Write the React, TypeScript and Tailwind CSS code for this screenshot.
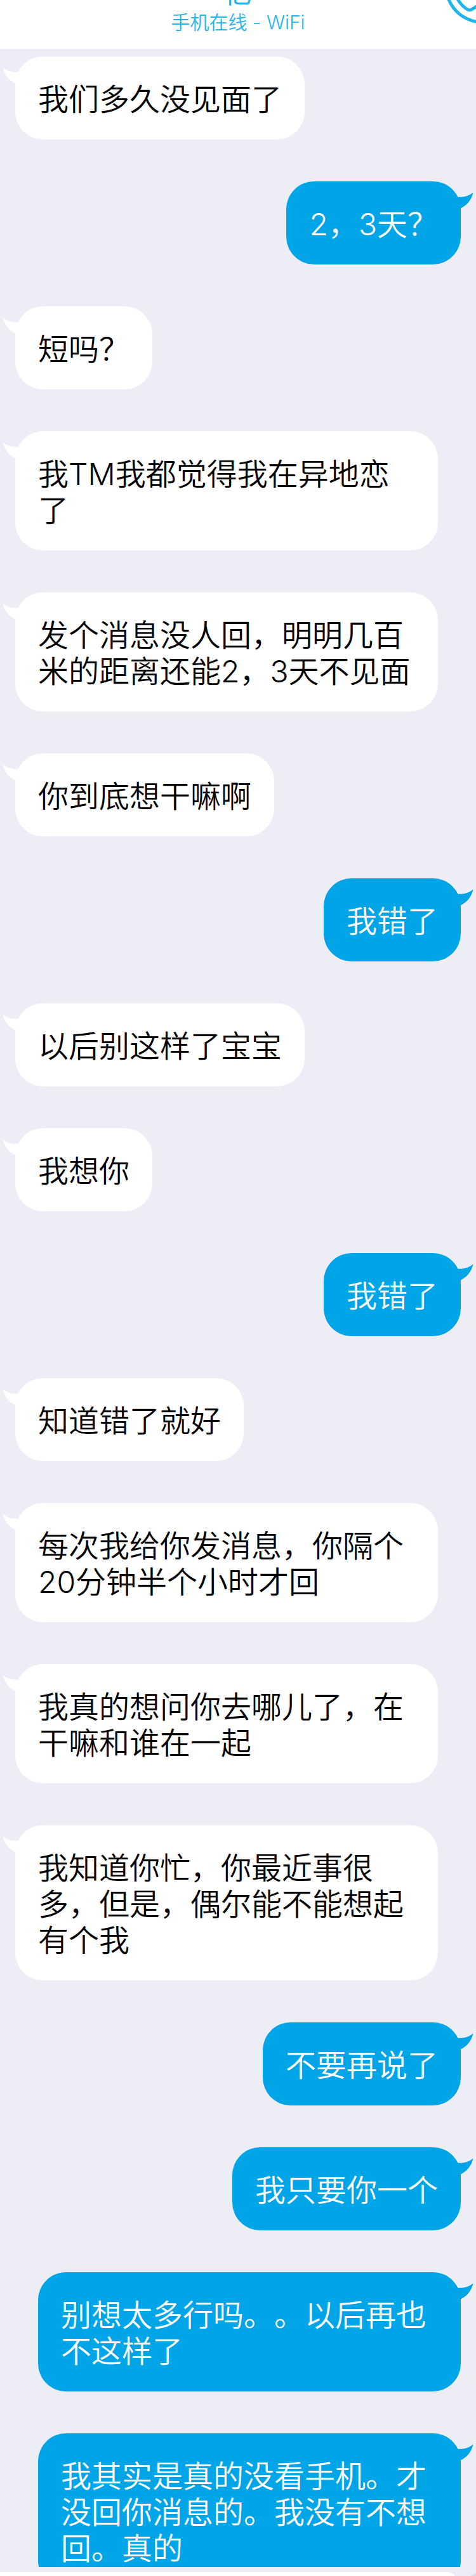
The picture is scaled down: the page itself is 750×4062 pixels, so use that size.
type Message = { from: "them" | "me"; text: string };

const messages: Message[] = [
  { from: "them", text: "我们多久没见面了" },
  { from: "me", text: "2，3天？" },
  { from: "them", text: "短吗？" },
  { from: "them", text: "我TM我都觉得我在异地恋了" },
  { from: "them", text: "发个消息没人回，明明几百米的距离还能2，3天不见面" },
  { from: "them", text: "你到底想干嘛啊" },
  { from: "me", text: "我错了" },
  { from: "them", text: "以后别这样了宝宝" },
  { from: "them", text: "我想你" },
  { from: "me", text: "我错了" },
  { from: "them", text: "知道错了就好" },
  { from: "them", text: "每次我给你发消息，你隔个20分钟半个小时才回" },
  { from: "them", text: "我真的想问你去哪儿了，在干嘛和谁在一起" },
  { from: "them", text: "我知道你忙，你最近事很多，但是，偶尔能不能想起有个我" },
  { from: "me", text: "不要再说了" },
  { from: "me", text: "我只要你一个" },
  { from: "me", text: "别想太多行吗。。以后再也不这样了" },
  { from: "me", text: "我其实是真的没看手机。才没回你消息的。我没有不想回。真的" },
];

function Tail({ mine }: { mine: boolean }) {
  return (
    <svg
      viewBox="0 0 26 28"
      aria-hidden="true"
      className={
        mine
          ? "absolute top-4 -right-5 h-7 w-[26px] text-[#00a5e7]"
          : "absolute top-4 -left-5 h-7 w-[26px] -scale-x-100 text-white"
      }
    >
      <path d="M0 8.500C10 9.500 18 7.500 25.500 1.500C23 13 15.500 22 6 26.500L0 26Z" fill="currentColor" />
    </svg>
  );
}

function Bubble({ from, text }: Message) {
  const mine = from === "me";
  return (
    <li className={mine ? "flex justify-end" : "flex justify-start"}>
      <div
        className={
          mine
            ? "relative max-w-[666px] rounded-[44px] bg-[#00a5e7] px-9 pt-[39px] pb-[35px] text-white"
            : "relative max-w-[666px] rounded-[44px] bg-white px-9 pt-[39px] pb-[35px] text-black"
        }
      >
        <Tail mine={mine} />
        <p className="text-[48px] leading-[57px] font-[350] break-all [text-spacing-trim:space-all]">{text}</p>
      </div>
    </li>
  );
}

export default function App() {
  return (
    <div className="flex min-h-screen flex-col bg-[#ededf6] font-['Inter','Noto_Sans_CJK_SC',sans-serif]">
      <header className="relative flex h-[77px] flex-col items-center justify-end overflow-hidden bg-white pb-5 text-[#1fb6ee]">
        <h1 className="text-[44px] leading-[48px]">忆</h1>
        <p className="text-[30px] leading-[44px] font-[350]">手机在线 - WiFi</p>
        <button type="button" aria-label="语音通话" className="absolute top-0 right-0 h-10 w-12">
          <svg viewBox="0 0 48 40" className="h-10 w-12" fill="none" stroke="currentColor" strokeWidth="5">
            <path d="M4 -3C12 17 28 31 52 35" />
            <path d="M18 -3C22 4 27 10 33 14Q37 17 41 15L52 8" />
          </svg>
        </button>
      </header>
      <main className="h-[3971px] overflow-hidden">
        <ul className="flex flex-col gap-[66px] pr-6 pl-6 pt-3">
          {messages.map((message, index) => (
            <Bubble key={index} from={message.from} text={message.text} />
          ))}
        </ul>
      </main>
      <footer className="flex h-[14px] items-start gap-4 overflow-hidden pt-2">
        <div className="h-20 flex-1 rounded-r-xl bg-white" />
        <div className="-mr-8 h-12 w-12 shrink-0 rounded-full bg-[#dcdce4]" />
      </footer>
    </div>
  );
}
